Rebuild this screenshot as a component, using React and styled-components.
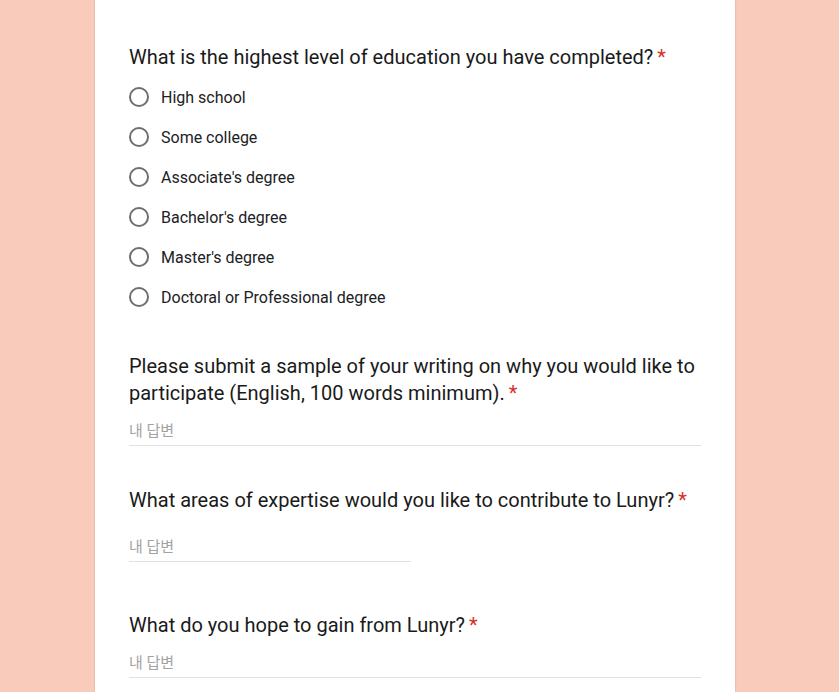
import React from 'react';
import styled, { createGlobalStyle } from 'styled-components';

const GlobalStyle = createGlobalStyle`
  html, body {
    margin: 0;
    padding: 0;
    background-color: #f9cbbb;
    font-family: Roboto, 'Noto Sans CJK KR', Arial, sans-serif;
  }
`;

const Page = styled.div`
  display: flex;
  width: 100%;
  height: 692px;
  overflow: hidden;
`;

const Card = styled.div`
  width: 640px;
  margin-left: 95px;
  padding: 44px 34px 0;
  box-sizing: border-box;
  background-color: #fff;
  box-shadow: 0 0 2px rgba(0, 0, 0, 0.18);
`;

const Question = styled.div`
  margin-bottom: ${p => p.$gap}px;
`;

const Title = styled.div`
  font-size: 20px;
  line-height: 27px;
  color: #1a1a1a;
  margin-bottom: ${p => p.$below}px;
`;

const Star = styled.span`
  color: #d93025;
  padding-left: 4px;
`;

const Options = styled.div`
  display: flex;
  flex-direction: column;
`;

const Option = styled.label`
  display: flex;
  align-items: center;
  height: 40px;
  gap: 12px;
  font-size: 16px;
  color: #202124;
`;

const Radio = styled.span`
  width: 20px;
  height: 20px;
  box-sizing: border-box;
  border: 2px solid #6e6e6e;
  border-radius: 50%;
  flex-shrink: 0;
`;

const Answer = styled.div`
  width: ${p => (p.$short ? '282px' : '100%')};
  font-size: 15px;
  line-height: 24px;
  color: #a2a2a2;
  padding-bottom: 2px;
  border-bottom: 1px solid #e0e0e0;
`;

const education = [
  'High school',
  'Some college',
  "Associate's degree",
  "Bachelor's degree",
  "Master's degree",
  'Doctoral or Professional degree',
];

const App = () => (
  <>
    <GlobalStyle />
    <Page>
      <Card>
        <Question $gap={36}>
          <Title $below={6}>
            What is the highest level of education you have completed?<Star>*</Star>
          </Title>
          <Options>
            {education.map(item => (
              <Option key={item}>
                <Radio />
                {item}
              </Option>
            ))}
          </Options>
        </Question>

        <Question $gap={41}>
          <Title $below={12}>
            Please submit a sample of your writing on why you would like to
            participate (English, 100 words minimum).<Star>*</Star>
          </Title>
          <Answer>내 답변</Answer>
        </Question>

        <Question $gap={50}>
          <Title $below={21}>
            What areas of expertise would you like to contribute to Lunyr?<Star>*</Star>
          </Title>
          <Answer $short>내 답변</Answer>
        </Question>

        <Question $gap={0}>
          <Title $below={12}>
            What do you hope to gain from Lunyr?<Star>*</Star>
          </Title>
          <Answer>내 답변</Answer>
        </Question>
      </Card>
    </Page>
  </>
);

export default App;
